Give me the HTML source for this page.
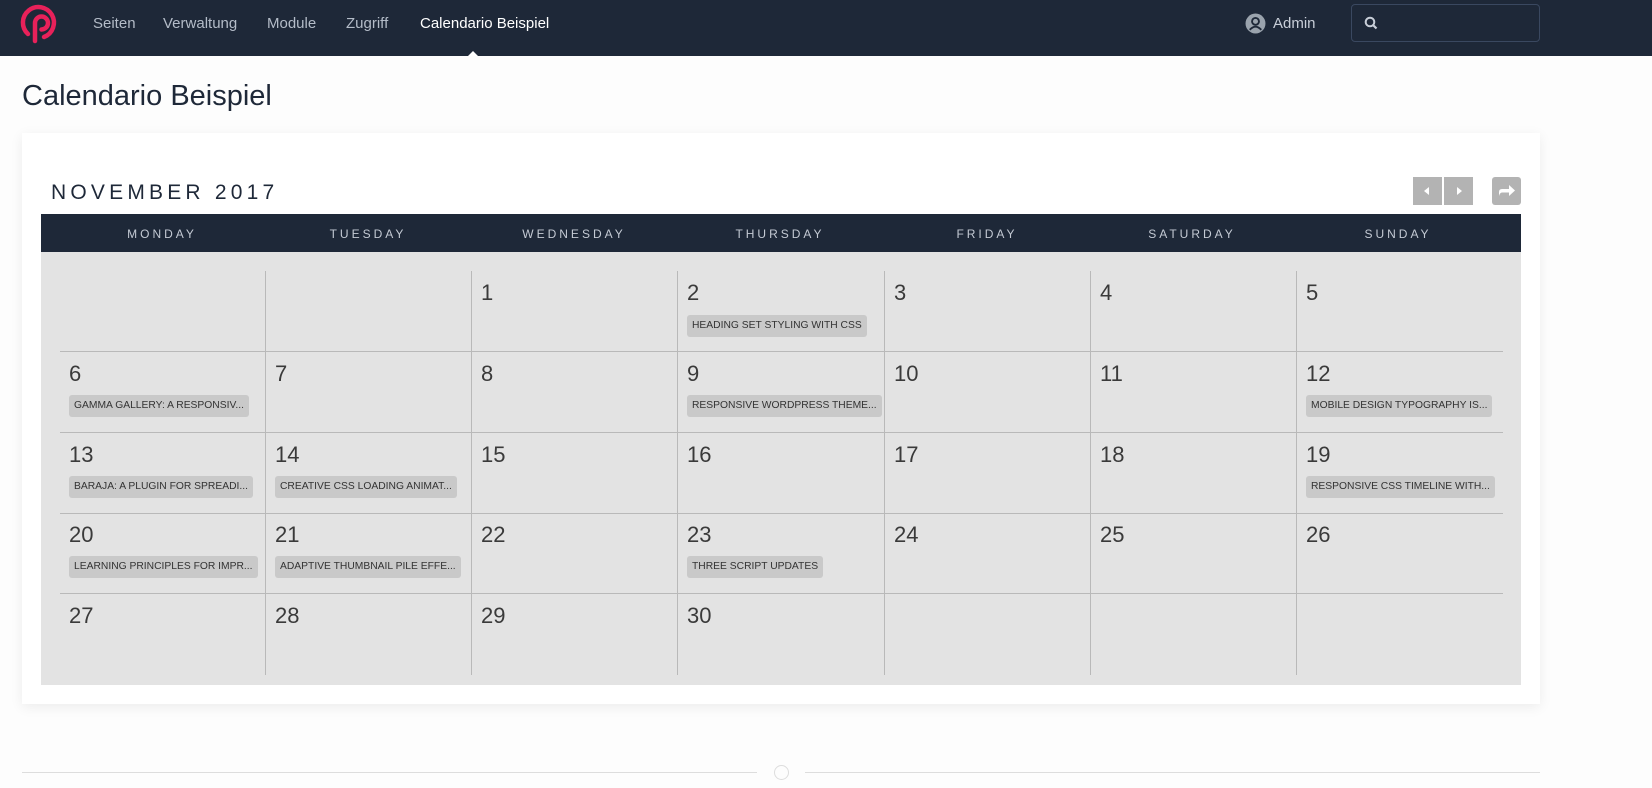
<!DOCTYPE html>
<html><head><meta charset="utf-8"><style>
*{margin:0;padding:0;box-sizing:border-box}
body{width:1652px;height:788px;background:#fdfdfd;font-family:"Liberation Sans",sans-serif;position:relative;overflow:hidden}
.nav{position:absolute;left:0;top:0;width:1652px;height:56px;background:#1e2838}
.nav a{position:absolute;top:15px;font-size:15px;color:#b4bcc8;text-decoration:none}
.nav a.act{color:#fff}
.caret{position:absolute;left:468px;top:51px;border:5px solid transparent;border-bottom-color:#fff;border-top:0}
.search{position:absolute;left:1351px;top:4px;width:189px;height:38px;border:1px solid #3a4860;border-radius:4px}
h1{position:absolute;left:22px;top:80px;font-size:29px;font-weight:400;color:#1e2838}
.card{position:absolute;left:22px;top:133px;width:1518px;height:571px;background:#fff;box-shadow:0 3px 12px rgba(0,0,0,.07)}
.month{position:absolute;left:51px;top:181px;font-size:21px;letter-spacing:4.2px;color:#1e2838;font-weight:300}
.btn{position:absolute;top:177px;width:29px;height:28px;background:#b3b3b3}
.head{position:absolute;left:41px;top:214px;width:1480px;height:38px;background:#1e2838}
.head span{position:absolute;top:13px;font-size:12px;letter-spacing:3px;color:#c4cad4;transform:translateX(-50%)}
.body{position:absolute;left:41px;top:252px;width:1480px;height:433px;background:#e3e3e3}
.vl{position:absolute;width:1px;background:#b9b9b9;top:271px;height:404px}
.hl{position:absolute;height:1px;background:#b9b9b9;left:60px;width:1443px}
.n{position:absolute;font-size:22px;font-weight:300;color:#3a3a3a}
.ev{position:absolute;height:22px;padding:0 5px;line-height:22px;background:#c9c9c9;border-radius:3px;font-size:10.3px;color:#333;white-space:nowrap}
.foot{position:absolute;top:772px;height:1px;background:#ddd}
</style></head><body>
<div class="nav">
<svg style="position:absolute;left:20px;top:2px" width="44" height="44" viewBox="20 2 44 44"><g fill="none" stroke="#e8215a" stroke-width="4.5" stroke-linecap="round"><path d="M28 34 A15.5 15.5 0 1 1 44 37"/><path d="M35 41 V23 a6.5 6.5 0 1 1 6.5 6.5"/></g></svg>
<a style="left:93px">Seiten</a><a style="left:163px">Verwaltung</a><a style="left:267px">Module</a><a style="left:346px">Zugriff</a><a class="act" style="left:420px">Calendario Beispiel</a>
<div class="caret"></div>
<svg style="position:absolute;left:1245px;top:13px" width="21" height="21" viewBox="0 0 20 20"><circle cx="10" cy="10" r="9.5" fill="#9aa3ad"/><circle cx="10" cy="8" r="3.3" fill="none" stroke="#1e2838" stroke-width="1.8"/><path d="M4.5 16 q5.5-6 11 0" fill="none" stroke="#1e2838" stroke-width="1.8"/></svg>
<a style="left:1273px;color:#c8ced8">Admin</a>
<div class="search"><svg style="position:absolute;left:12px;top:11px" width="14" height="14" viewBox="0 0 14 14"><circle cx="6" cy="6" r="4.3" fill="none" stroke="#c8ced8" stroke-width="2"/><path d="M9 9 L12.5 12.5" stroke="#c8ced8" stroke-width="2.2"/></svg></div>
</div>
<h1>Calendario Beispiel</h1>
<div class="card"></div>
<div class="month">NOVEMBER 2017</div>
<div class="btn" style="left:1413px"><div style="position:absolute;left:11px;top:10px;border:4px solid transparent;border-right:5px solid #fff;border-left:0"></div></div>
<div class="btn" style="left:1444px"><div style="position:absolute;left:13px;top:10px;border:4px solid transparent;border-left:5px solid #fff;border-right:0"></div></div>
<div class="btn" style="left:1492px;border-radius:3px"><svg style="position:absolute;left:7px;top:8px" width="16" height="12" viewBox="0 0 16 12"><path d="M0 11 V7 q0-3 3-3 H10 V0 L16 5.5 L10 11 V7.5 H3 q-2 0-3 3.5z" fill="#fff"/></svg></div>
<div class="head">
<span style="left:121px">MONDAY</span><span style="left:327px">TUESDAY</span><span style="left:533px">WEDNESDAY</span><span style="left:739px">THURSDAY</span><span style="left:946px">FRIDAY</span><span style="left:1151px">SATURDAY</span><span style="left:1357px">SUNDAY</span>
</div>
<div class="body"></div>
<div class="vl" style="left:265px"></div><div class="vl" style="left:471px"></div><div class="vl" style="left:677px"></div><div class="vl" style="left:884px"></div><div class="vl" style="left:1090px"></div><div class="vl" style="left:1296px"></div>
<div class="hl" style="top:351px"></div><div class="hl" style="top:432px"></div><div class="hl" style="top:513px"></div><div class="hl" style="top:593px"></div>

<div class="n" style="left:481px;top:280px">1</div>
<div class="n" style="left:687px;top:280px">2</div>
<div class="n" style="left:894px;top:280px">3</div>
<div class="n" style="left:1100px;top:280px">4</div>
<div class="n" style="left:1306px;top:280px">5</div>
<div class="ev" style="left:687px;top:315px">HEADING SET STYLING WITH CSS</div>

<div class="n" style="left:69px;top:361px">6</div>
<div class="n" style="left:275px;top:361px">7</div>
<div class="n" style="left:481px;top:361px">8</div>
<div class="n" style="left:687px;top:361px">9</div>
<div class="n" style="left:894px;top:361px">10</div>
<div class="n" style="left:1100px;top:361px">11</div>
<div class="n" style="left:1306px;top:361px">12</div>
<div class="ev" style="left:69px;top:395px">GAMMA GALLERY: A RESPONSIV...</div>
<div class="ev" style="left:687px;top:395px">RESPONSIVE WORDPRESS THEME...</div>
<div class="ev" style="left:1306px;top:395px">MOBILE DESIGN TYPOGRAPHY IS...</div>

<div class="n" style="left:69px;top:442px">13</div>
<div class="n" style="left:275px;top:442px">14</div>
<div class="n" style="left:481px;top:442px">15</div>
<div class="n" style="left:687px;top:442px">16</div>
<div class="n" style="left:894px;top:442px">17</div>
<div class="n" style="left:1100px;top:442px">18</div>
<div class="n" style="left:1306px;top:442px">19</div>
<div class="ev" style="left:69px;top:476px">BARAJA: A PLUGIN FOR SPREADI...</div>
<div class="ev" style="left:275px;top:476px">CREATIVE CSS LOADING ANIMAT...</div>
<div class="ev" style="left:1306px;top:476px">RESPONSIVE CSS TIMELINE WITH...</div>

<div class="n" style="left:69px;top:522px">20</div>
<div class="n" style="left:275px;top:522px">21</div>
<div class="n" style="left:481px;top:522px">22</div>
<div class="n" style="left:687px;top:522px">23</div>
<div class="n" style="left:894px;top:522px">24</div>
<div class="n" style="left:1100px;top:522px">25</div>
<div class="n" style="left:1306px;top:522px">26</div>
<div class="ev" style="left:69px;top:556px">LEARNING PRINCIPLES FOR IMPR...</div>
<div class="ev" style="left:275px;top:556px">ADAPTIVE THUMBNAIL PILE EFFE...</div>
<div class="ev" style="left:687px;top:556px">THREE SCRIPT UPDATES</div>

<div class="n" style="left:69px;top:603px">27</div>
<div class="n" style="left:275px;top:603px">28</div>
<div class="n" style="left:481px;top:603px">29</div>
<div class="n" style="left:687px;top:603px">30</div>

<div class="foot" style="left:22px;width:735px"></div>
<div class="foot" style="left:805px;width:735px"></div>
<div style="position:absolute;left:774px;top:765px;width:15px;height:15px;border:1.5px solid #ddd;border-radius:50%"></div>
</body></html>
